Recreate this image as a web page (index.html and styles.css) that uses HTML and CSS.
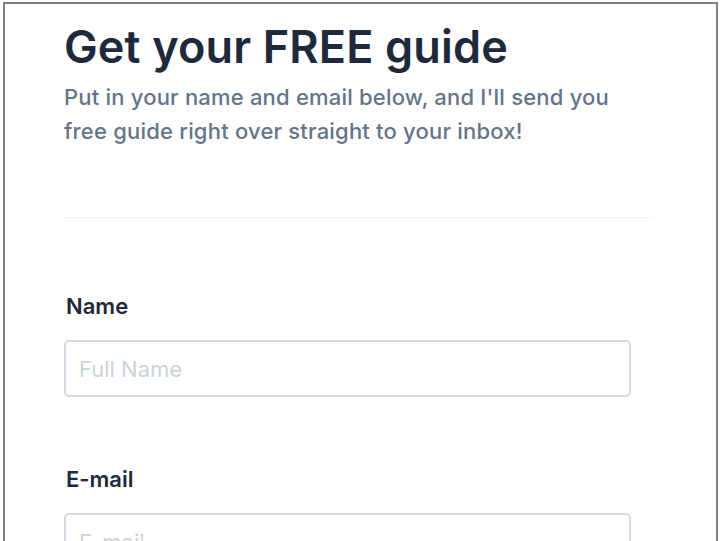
FILE: index.html
```html
<!DOCTYPE html>
<html lang="en">
<head>
  <meta charset="UTF-8">
  <meta name="viewport" content="width=device-width, initial-scale=1.0">
  <title>Get your FREE guide</title>
  <link rel="stylesheet" href="styles.css">
</head>
<body>

  <!-- framed signup panel -->
  <div class="frame">
    <div class="guide">
      <h1 class="guide-title">Get your FREE guide</h1>
      <p class="guide-text">Put in your name and email below, and I'll send you free guide right over straight to your inbox!</p>

      <hr class="divider">

      <form class="guide-form">
        <div class="field">
          <label for="name">Name</label>
          <input type="text" id="name" name="name" placeholder="Full Name">
        </div>
        <div class="field">
          <label for="email">E-mail</label>
          <input type="email" id="email" name="email" placeholder="E-mail">
        </div>
      </form>
    </div>
  </div>

</body>
</html>
```

FILE: styles.css
```css
body {
  margin: 0;
  padding: 0;
  background-color: #ffffff;
  font-family: Inter, "Noto Sans", Arial, sans-serif;
  overflow: hidden;
}
/* outer frame */
.frame {
  margin: 2px 2px 0 3px;
  border: 2px solid #7f7f7f;
  border-bottom: none;
  height: 700px;
  box-sizing: border-box;
}
.guide {
  padding: 16px 0 0 59px;
  width: 589px;
}
.guide-title {
  margin: 0;
  font-size: 45px;
  font-weight: 600;
  line-height: 54px;
  letter-spacing: 0.15px;
  color: #1e293b;
}
.guide-text {
  margin: 6px 0 0;
  max-width: 570px;
  font-size: 22px;
  font-weight: 500;
  line-height: 34px;
  letter-spacing: 0.2px;
  color: #64748b;
}
.divider {
  margin: 69px 0 0;
  border: none;
  border-top: 1px solid #f1f3f9;
}
/* form */
.guide-form {
  padding-top: 73px;
}
.field {
  margin-bottom: 67px;
}
.field label {
  display: block;
  padding-left: 2px;
  font-size: 22px;
  font-weight: 600;
  line-height: 30px;
  color: #1e293b;
  margin-bottom: 19px;
}
.field input {
  display: block;
  width: 567px;
  height: 57px;
  box-sizing: border-box;
  padding: 0 13px;
  border: 2px solid #d5dae3;
  border-radius: 5px;
  font-family: inherit;
  font-size: 22px;
  color: #1e293b;
  outline: none;
}
.field input::placeholder {
  color: #cbd2dc;
}
```
